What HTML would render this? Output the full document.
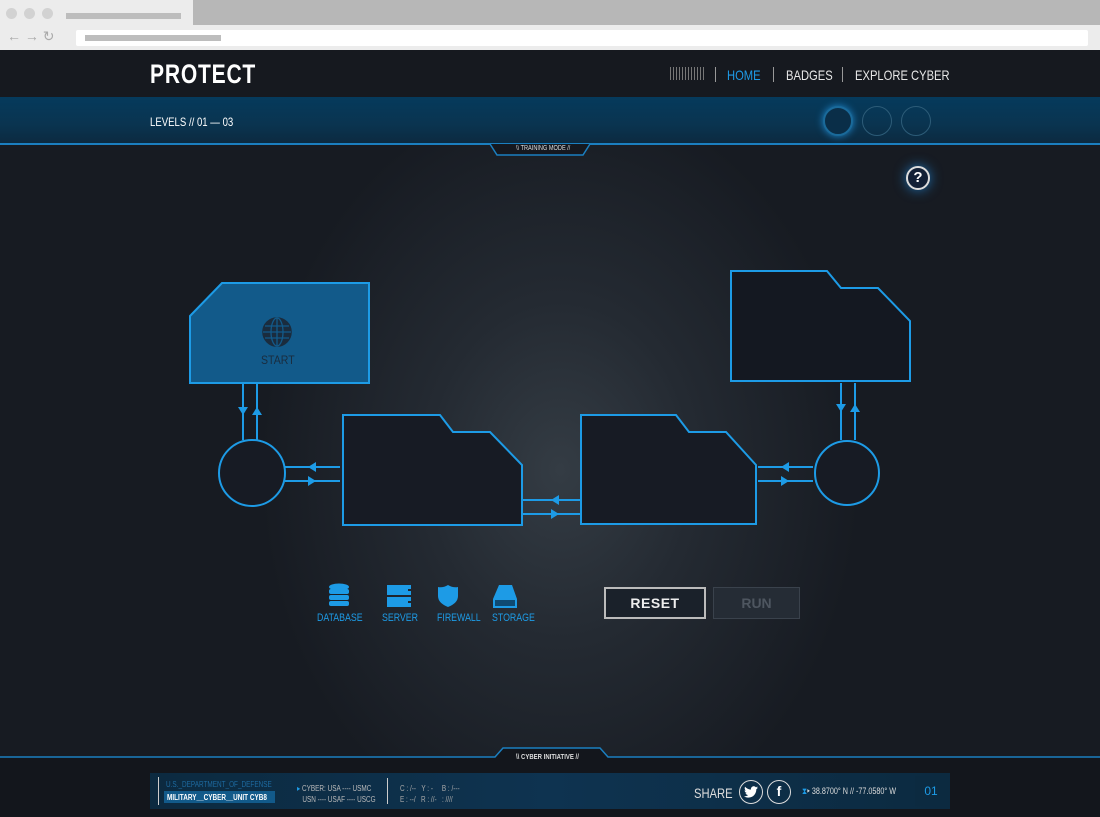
<!DOCTYPE html>
<html><head><meta charset="utf-8"><style>
*{margin:0;padding:0;box-sizing:border-box}
body{width:1100px;height:817px;overflow:hidden;background:#15181f;font-family:"Liberation Sans",sans-serif;position:relative}
.abs{position:absolute;white-space:nowrap}
.sx{transform:scaleX(.8);transform-origin:left top}
</style></head><body>
<!-- browser chrome -->
<div class="abs" style="left:0;top:0;width:1100px;height:50px;background:#ececec"></div>
<div class="abs" style="left:193px;top:0;width:907px;height:25px;background:#b7b7b7"></div>
<div class="abs" style="left:6px;top:8px;width:11px;height:11px;border-radius:50%;background:#d2d2d2"></div>
<div class="abs" style="left:24px;top:8px;width:11px;height:11px;border-radius:50%;background:#d2d2d2"></div>
<div class="abs" style="left:42px;top:8px;width:11px;height:11px;border-radius:50%;background:#d2d2d2"></div>
<div class="abs" style="left:66px;top:13px;width:115px;height:6px;background:#bdbdbd"></div>
<div class="abs" style="left:7px;top:28px;font-size:14px;color:#aaa">←&nbsp;→&nbsp;↻</div>
<div class="abs" style="left:76px;top:30px;width:1012px;height:16px;background:#fff;border-radius:2px"></div>
<div class="abs" style="left:85px;top:35px;width:136px;height:6px;background:#bdbdbd"></div>
<!-- main bg -->
<div class="abs" style="left:0;top:50px;width:1100px;height:767px;background:radial-gradient(ellipse 300px 380px at 560px 420px,#343c44 0%,#242a32 45%,#171b22 100%)"></div>
<!-- nav -->
<div class="abs" style="left:0;top:50px;width:1100px;height:47px;background:#16191f"></div>
<div class="abs sx" style="left:150px;top:59px;font-size:27px;font-weight:bold;color:#fff;letter-spacing:1px;transform:scaleX(.78)">PROTECT</div>
<div class="abs" style="left:670px;top:67px;width:35px;height:13px;background:repeating-linear-gradient(90deg,#777 0 1px,transparent 1px 3px)"></div>
<div class="abs" style="left:715px;top:67px;width:1px;height:15px;background:#999"></div>
<div class="abs sx" style="left:727px;top:67px;font-size:14px;color:#1e9be8">HOME</div>
<div class="abs" style="left:773px;top:67px;width:1px;height:15px;background:#999"></div>
<div class="abs sx" style="left:786px;top:67px;font-size:14px;color:#e8e8e8">BADGES</div>
<div class="abs" style="left:842px;top:67px;width:1px;height:15px;background:#999"></div>
<div class="abs sx" style="left:855px;top:67px;font-size:14px;color:#e8e8e8">EXPLORE CYBER</div>
<!-- blue band -->
<div class="abs" style="left:0;top:97px;width:1100px;height:46px;background:linear-gradient(#053a5c,#0a3450 60%,#0c2a40)"></div>
<div class="abs" style="left:0;top:143px;width:1100px;height:2px;background:#1b7fc0"></div>
<div class="abs sx" style="left:150px;top:115px;font-size:12px;color:#fff">LEVELS // 01 — 03</div>
<div class="abs" style="left:823px;top:106px;width:30px;height:30px;border-radius:50%;border:2px solid #1a6a9a;background:#0a2e48;box-shadow:0 0 8px #1f8ad0"></div>
<div class="abs" style="left:862px;top:106px;width:30px;height:30px;border-radius:50%;border:1px solid #2d5c78"></div>
<div class="abs" style="left:901px;top:106px;width:30px;height:30px;border-radius:50%;border:1px solid #2d5c78"></div>
<svg class="abs" style="left:0;top:140px" width="1100" height="20"><path d="M490 4 L497 15 L583 15 L590 4" fill="#15181f" stroke="#1b7fc0" stroke-width="1.5"/></svg>
<div class="abs sx" style="left:516px;top:145px;font-size:7px;color:#ddd">\\ TRAINING MODE //</div>
<div class="abs" style="left:906px;top:166px;width:24px;height:24px;border-radius:50%;border:2px solid #ddd;background:#122036;box-shadow:0 0 12px #1d6fb0;color:#fff;font-weight:bold;font-size:15px;text-align:center;line-height:20px">?</div>
<!-- diagram -->
<svg class="abs" style="left:0;top:0" width="1100" height="817" fill="none" stroke="#1d9be6" stroke-width="2">
<path d="M190 316 L222 283 L369 283 L369 383 L190 383 Z" fill="#125a8a"/>
<path d="M343 415 L440 415 L453 432 L490 432 L522 465 L522 525 L343 525 Z" fill="#171b24"/>
<path d="M581 415 L676 415 L689 432 L726 432 L756 465 L756 524 L581 524 Z" fill="#171b24"/>
<path d="M731 271 L827 271 L841 288 L878 288 L910 321 L910 381 L731 381 Z" fill="#141821"/>
<circle cx="252" cy="473" r="33" fill="#171b24"/>
<circle cx="847" cy="473" r="32" fill="#171b24"/>
<path d="M243 383V440M257 383V440M841 383V440M855 383V440M285 467H340M285 481H340M522 500H580M522 514H580M758 467H813M758 481H813"/>
<g fill="#1d9be6" stroke="none">
<path d="M238 407h10l-5 8z M252 415h10l-5-8z M836 404h10l-5 8z M850 412h10l-5-8z"/>
<path d="M316 462v10l-8-5z M308 476v10l8-5z M559 495v10l-8-5z M551 509v10l8-5z M789 462v10l-8-5z M781 476v10l8-5z"/>
</g>
<g stroke="#1a2c3e" stroke-width="1.6"><circle cx="277" cy="332" r="14" fill="#1a2c3e"/></g>
<g stroke="#125a8a" stroke-width="1.3"><path d="M263 332h28M265 326h24M265 338h24M277 318v28"/><ellipse cx="277" cy="332" rx="6" ry="14"/></g>
</svg>
<div class="abs" style="left:261px;top:353px;font-size:12px;color:#1a2c3e;transform:scaleX(.88);transform-origin:left">START</div>
<!-- tools -->
<svg class="abs" style="left:320px;top:583px" width="220" height="26" fill="#1d9be6">
<ellipse cx="19" cy="4" rx="10" ry="3.5"/><rect x="9" y="6" width="20" height="5" rx="2"/><rect x="9" y="12" width="20" height="5" rx="2"/><rect x="9" y="18" width="20" height="5" rx="2"/>
<path d="M67 2h24v4h-3v2h3v4h-24zM67 14h24v4h-3v2h3v4h-24z"/>
<path d="M128 2 Q133 5 138 4 L138 13 Q138 20 128 24 Q118 20 118 13 L118 4 Q123 5 128 2z"/>
<path d="M179 2h13l5 14v9h-24v-9z"/><rect x="175" y="17" width="20" height="6" fill="#0f4a72"/>
</svg>
<div class="abs sx" style="left:317px;top:612px;font-size:11px;color:#1d9be6">DATABASE</div>
<div class="abs sx" style="left:382px;top:612px;font-size:11px;color:#1d9be6">SERVER</div>
<div class="abs sx" style="left:437px;top:612px;font-size:11px;color:#1d9be6">FIREWALL</div>
<div class="abs sx" style="left:492px;top:612px;font-size:11px;color:#1d9be6">STORAGE</div>
<div class="abs" style="left:604px;top:587px;width:102px;height:32px;border:2px solid #bbb;background:#1a212a;color:#eee;font-size:14px;font-weight:bold;text-align:center;line-height:28px;letter-spacing:.5px">RESET</div>
<div class="abs" style="left:713px;top:587px;width:87px;height:32px;border:1px solid #3a424c;background:#252c35;color:#4e5660;font-size:14px;font-weight:bold;text-align:center;line-height:30px">RUN</div>
<!-- footer -->
<div class="abs" style="left:0;top:757px;width:1100px;height:60px;background:#13161c"></div>
<svg class="abs" style="left:0;top:745px" width="1100" height="16"><path d="M0 12 L495 12 L503 3 L600 3 L608 12 L1100 12" stroke="#1b7fc0" stroke-width="1.5" fill="#13161c"/></svg>
<div class="abs sx" style="left:516px;top:752px;font-size:7.5px;color:#ddd;font-weight:bold">\\ CYBER INITIATIVE //</div>
<div class="abs" style="left:150px;top:773px;width:800px;height:36px;background:linear-gradient(90deg,#0c2a40,#0e3350 50%,#0c2a40)"></div>
<div class="abs" style="left:158px;top:777px;width:1px;height:28px;background:#ccc"></div>
<div class="abs sx" style="left:166px;top:780px;font-size:8px;color:#1d6aa0">U.S._DEPARTMENT_OF_DEFENSE</div>
<div class="abs" style="left:164px;top:791px;width:111px;height:12px;background:#125a8a"></div>
<div class="abs sx" style="left:167px;top:792px;font-size:8px;font-weight:bold;color:#fff;line-height:11px">MILITARY__CYBER__UNIT CYB8</div>
<div class="abs sx" style="left:297px;top:783px;font-size:8px;color:#bbb;line-height:11px"><span style="color:#1d9be6">▸</span> CYBER: USA ---- USMC<br>&nbsp;&nbsp;&nbsp;USN ---- USAF ---- USCG</div>
<div class="abs" style="left:387px;top:778px;width:1px;height:26px;background:#ccc"></div>
<div class="abs sx" style="left:400px;top:783px;font-size:8px;color:#aaa;line-height:11px">C : /--&nbsp;&nbsp;&nbsp;Y : -&nbsp;&nbsp;&nbsp;&nbsp;&nbsp;B : /---<br>E : --/&nbsp;&nbsp;&nbsp;R : //-&nbsp;&nbsp;&nbsp;: ////</div>
<div class="abs sx" style="left:694px;top:785px;font-size:14px;color:#ddd">SHARE</div>
<div class="abs" style="left:739px;top:780px;width:24px;height:24px;border-radius:50%;border:1.5px solid #ddd"></div>
<svg class="abs" style="left:744px;top:786px" width="14" height="12"><path d="M14 1.5c-.5.2-1 .4-1.6.5.6-.4 1-.9 1.2-1.5-.6.3-1.2.6-1.8.7C11.2.5 10.5.2 9.7.2 8.2.2 6.9 1.5 6.9 3c0 .2 0 .4.1.6C4.6 3.5 2.5 2.4 1.1.7.8 1.2.7 1.7.7 2.2c0 1 .5 1.8 1.2 2.3-.5 0-.9-.1-1.3-.3 0 1.4 1 2.5 2.2 2.8-.4.1-.8.2-1.3.1.4 1.1 1.4 1.9 2.6 1.9C3.2 9.9 1.8 10.4.3 10.4H0c1.2.8 2.7 1.2 4.3 1.2 5.2 0 8-4.3 8-8v-.4c.6-.4 1.1-.9 1.5-1.5z" fill="#fff"/></svg>
<div class="abs" style="left:767px;top:780px;width:24px;height:24px;border-radius:50%;border:1.5px solid #ddd;color:#fff;font-size:14px;font-weight:bold;text-align:center;line-height:21px">f</div>
<div class="abs sx" style="left:802px;top:786px;font-size:9px;color:#1d9be6">⧗<span style="color:#ddd">▸ 38.8700° N // -77.0580° W</span></div>
<div class="abs" style="left:915px;top:776px;width:32px;height:30px;background:#0c2a40;color:#1d9be6;font-size:12px;text-align:center;line-height:30px">01</div>
</body></html>
